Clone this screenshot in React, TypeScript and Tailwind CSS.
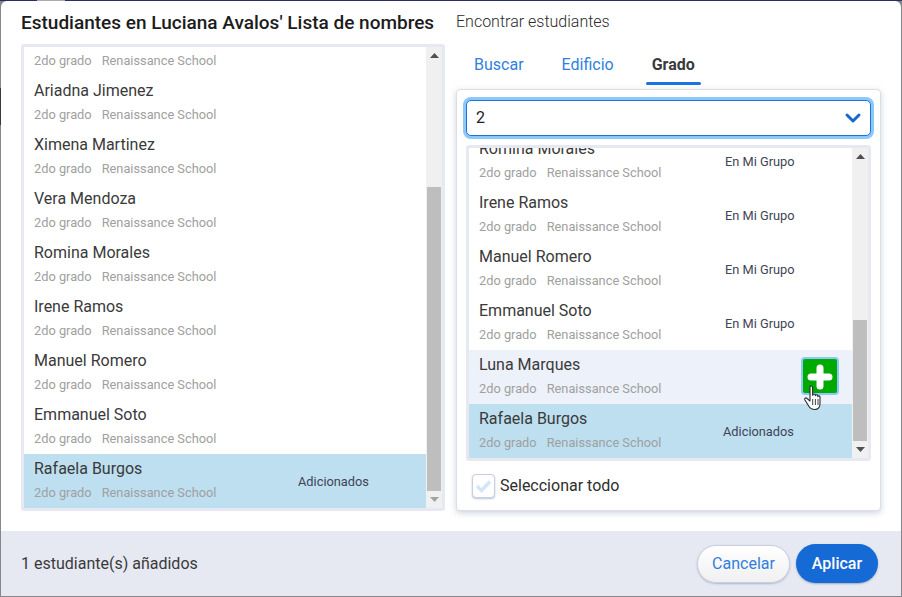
import { ChevronDown } from "lucide-react";

const leftRows = ["", "Ariadna Jimenez", "Ximena Martinez", "Vera Mendoza", "Romina Morales", "Irene Ramos", "Manuel Romero", "Emmanuel Soto"];
const rightRows = ["Romina Morales", "Irene Ramos", "Manuel Romero", "Emmanuel Soto"];

function StudentText({ name }: { name: string }) {
  return (
    <div>
      <div className="h-[20px] text-[16px] leading-[20px] text-[#3a3a3a]">{name}</div>
      <div className="mt-[4px] flex gap-[10px] text-[12.8px] leading-[20px] text-[#a0a0a0]">
        <span>2do grado</span>
        <span>Renaissance School</span>
      </div>
    </div>
  );
}

function Row({ name, status, selected, hover, statusX }: { name: string; status?: string; selected?: boolean; hover?: boolean; statusX: string }) {
  return (
    <div className={`relative flex h-[54px] shrink-0 items-center pl-[10px] ${selected ? "bg-[#bddff0]" : hover ? "bg-[#edf1f9]" : "bg-white"}`}>
      <StudentText name={name} />
      {status && <div className={`absolute top-[20px] text-[12.8px] leading-[16px] text-[#3f4456] ${statusX}`}>{status}</div>}
    </div>
  );
}

function Arrow({ down, dim }: { down?: boolean; dim?: boolean }) {
  return (
    <svg width="9" height="5" viewBox="0 0 9 5" className={dim ? "text-[#a3a3a3]" : "text-[#505050]"}>
      <path d={down ? "M0 0h9L4.5 5z" : "M0 5h9L4.5 0z"} fill="currentColor" />
    </svg>
  );
}

function Scrollbar({ thumb, dimDown }: { thumb: string; dimDown?: boolean }) {
  return (
    <div className="flex w-[16px] shrink-0 flex-col bg-[#f0f0f0]">
      <div className="flex h-[17px] items-center justify-center"><Arrow /></div>
      <div className="flex flex-1 flex-col justify-end px-[1px]">
        <div className={`bg-[#bebebe] ${thumb}`} />
      </div>
      <div className="flex h-[17px] items-center justify-center"><Arrow down dim={dimDown} /></div>
    </div>
  );
}

function AddCursor() {
  return (
    <svg width="20" height="27" viewBox="0 0 20 27" className="absolute left-[803px] top-[385px]">
      <path
        d="M7 2.2c0-1.6 2.6-1.6 2.6 0v8l.4-.1c0-1.4 2.4-1.4 2.4 0v.6c.2-1.3 2.4-1.3 2.4.1v.8c.3-1.1 2.2-.9 2.2.5v6.4c0 3.500-2 6-5.300 6-3 0-4.600-1.200-6-3.500l-3.800-6c-.9-1.500 1-2.800 2.200-1.500L7 16z"
        fill="#ffffff"
        stroke="#2b2b33"
        strokeWidth="1.100"
        strokeLinejoin="round"
      />
      <path d="M9.700 14v6M12.400 14v6M15 14v6" stroke="#2b2b33" strokeWidth="0.900" fill="none" />
    </svg>
  );
}

export default function App() {
  return (
    <div className="relative h-[597px] w-[902px] overflow-hidden bg-[#85878c] font-['Roboto',sans-serif]">
      <div className="absolute left-0 top-0 h-[1px] w-full bg-[#2a2e66]" />
      <div className="absolute left-[37px] top-0 h-[1px] w-[28px] bg-[#a9abb0]" />
      <div className="absolute left-0 top-[88px] h-[37px] w-[1px] bg-[#3a3a3c]" />

      <div className="relative ml-[1px] mt-[1px] flex h-[595px] w-[900px] flex-col overflow-hidden rounded-t-[6px] bg-white">
        <div className="flex flex-1 pl-[20px] pt-[9px]">
          {/* left column */}
          <div className="w-[424px] shrink-0">
            <h1 className="h-[34px] whitespace-nowrap text-[19px] font-medium leading-[26px] text-[#1c1c1c]">
              Estudiantes en Luciana Avalos' Lista de nombres
            </h1>
            <div className="flex h-[467px] rounded-[3px] border-[3px] border-[#e6e9f2]">
              <div className="flex min-w-0 flex-1 flex-col justify-end overflow-hidden">
                {leftRows.map((n) => (
                  <Row key={n} name={n} statusX="left-[274px]" />
                ))}
                <Row name="Rafaela Burgos" status="Adicionados" selected statusX="left-[274px]" />
              </div>
              <Scrollbar thumb="h-[304px]" dimDown />
            </div>
          </div>

          {/* right column */}
          <div className="ml-[11px] w-[425px] shrink-0">
            <div className="h-[28px] pt-[1px] text-[16px] font-light leading-[22px] text-[#2a2a2a]">Encontrar estudiantes</div>
            <div className="flex h-[51px] pl-[18px] pt-[16px] text-[16px] leading-[22px]">
              <span className="text-[#2f7fe0]">Buscar</span>
              <span className="ml-[38px] text-[#2f7fe0]">Edificio</span>
              <span className="relative ml-[38px] font-bold text-[#3a3a3a]">
                Grado
                <span className="absolute left-[-6px] top-[28px] h-[3px] w-[55px] rounded-[2px] bg-[#1a73e0]" />
              </span>
            </div>
            <div className="h-[422px] rounded-[4px] border border-[#dcdee3] bg-white px-[9px] pt-[10px] shadow-[0_2px_6px_rgba(90,105,150,0.3)]">
              <div className="flex h-[36px] items-center justify-between rounded-[5px] border border-[#1a73e0] bg-white pl-[9px] pr-[5px] text-[16px] text-[#222222] shadow-[0_0_0_3px_#8cc8f8]">
                <span>2</span>
                <ChevronDown size={24} strokeWidth={3} className="text-[#1668d0]" />
              </div>
              <div className="mt-[9px] flex h-[316px] rounded-[3px] border-[3px] border-[#e6e9f2]">
                <div className="relative flex min-w-0 flex-1 flex-col justify-end overflow-hidden">
                  {rightRows.map((n) => (
                    <Row key={n} name={n} status="En Mi Grupo" statusX="left-[256px]" />
                  ))}
                  <Row name="Luna Marques" hover statusX="left-[256px]" />
                  <Row name="Rafaela Burgos" status="Adicionados" selected statusX="left-[254px]" />
                </div>
                <Scrollbar thumb="h-[121px]" />
              </div>
              <div className="mt-[13px] flex items-center gap-[5px] pl-[6px]">
                <div className="flex h-[24px] w-[23px] items-center justify-center rounded-[4px] border border-[#c9cfe0] bg-white shadow-[0_1px_2px_rgba(90,105,150,0.4)]">
                  <svg width="17" height="14" viewBox="0 0 17 14">
                    <path d="M2 7l4.500 4.500L15 2.500" fill="none" stroke="#d3e5fa" strokeWidth="3.400" />
                  </svg>
                </div>
                <span className="text-[16px] leading-[22px] text-[#2e2e2e]">Seleccionar todo</span>
              </div>
            </div>
          </div>
        </div>

        <div className="flex h-[65px] shrink-0 items-center justify-between bg-[#e6e9f2] pl-[20px] pr-[23px]">
          <span className="text-[16px] text-[#3a3a3a]">1 estudiante(s) añadidos</span>
          <div className="flex items-center gap-[6px]">
            <button className="h-[38px] w-[93px] rounded-full border border-[#c9cfe0] bg-gradient-to-b from-white to-[#f0f0f0] text-[16px] text-[#2f7fe0] shadow-[0_1px_2px_rgba(90,105,150,0.4)]">
              Cancelar
            </button>
            <button className="h-[39px] w-[82px] rounded-full bg-[#166ad6] text-[16px] font-medium text-white shadow-[0_1px_2px_rgba(60,80,130,0.4)]">
              Aplicar
            </button>
          </div>
        </div>
      </div>

      {/* hovered add button and pointer */}
      <div className="absolute left-[801px] top-[357px] flex h-[38px] w-[38px] items-center justify-center rounded-[4px] border-[2px] border-[#8cc8f8] bg-[#00aa00]">
        <svg width="26" height="26" viewBox="0 0 26 26" className="mt-[2px]">
          <path d="M13 4v18M4 13h18" stroke="#ffffff" strokeWidth="7" strokeLinecap="round" />
        </svg>
      </div>
      <AddCursor />
    </div>
  );
}
